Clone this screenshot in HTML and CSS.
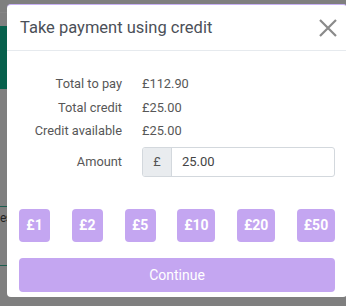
FILE: index.html
```html
<!DOCTYPE html>
<html>
<head>
<meta charset="utf-8">
<link rel="stylesheet" href="styles.css">
</head>
<body>
<div class="page">
  <div class="strip">
    <div class="strip-top"></div>
    <div class="strip-green"></div>
    <div class="strip-gap"></div>
    <div class="strip-line"></div>
    <div class="strip-text">es</div>
    <div class="strip-space"></div>
    <div class="strip-line"></div>
  </div>
  <div class="modal">
    <div class="modal-header">
      <h1 class="title">Take payment using credit</h1>
      <svg class="close" width="20" height="20" viewBox="0 0 20 20"><path d="M2 2 L18 18 M18 2 L2 18" stroke="#8a8a8a" stroke-width="2.2" fill="none"/></svg>
    </div>
    <div class="modal-body">
      <div class="summary">
        <div class="label">Total to pay</div><div class="value">£112.90</div>
        <div class="label">Total credit</div><div class="value">£25.00</div>
        <div class="label">Credit available</div><div class="value">£25.00</div>
        <div class="label">Amount</div>
        <div class="input-group"><span class="addon">£</span><span class="input">25.00</span></div>
      </div>
      <div class="quick">
        <button class="qbtn">£1</button>
        <button class="qbtn">£2</button>
        <button class="qbtn">£5</button>
        <button class="qbtn wide">£10</button>
        <button class="qbtn wide">£20</button>
        <button class="qbtn wide">£50</button>
      </div>
      <button class="continue">Continue</button>
    </div>
  </div>
</div>
</body>
</html>
```
FILE: styles.css
```css
html, body { margin: 0; padding: 0; }
body {
  width: 346px;
  height: 306px;
  overflow: hidden;
  background: #7f7f7f;
  font-family: Roboto, "Noto Sans", sans-serif;
}
.page { display: flex; height: 306px; }
.strip { flex: 0 0 7px; width: 7px; display: flex; flex-direction: column; overflow: hidden; }
.strip-top { height: 12px; border-bottom: 1px solid #858585; flex: 0 0 auto; }
.strip-green { margin-top: 13px; height: 63px; background: #07604c; }
.strip-gap { height: 117px; }
.strip-line { height: 1px; background: #1d5e4f; }
.strip-text { height: 18px; line-height: 18px; font-size: 12px; color: #222; white-space: nowrap; margin-top: 2px; letter-spacing: -0.5px; }
.strip-space { height: 38px; }

.modal {
  flex: 0 0 340px;
  margin-top: 4px;
  height: 292px;
  background: #fff;
  border-top: 1px solid #c7b0f3;
  border-radius: 4px;
  display: flex;
  flex-direction: column;
}
.modal-header {
  height: 45px;
  border-bottom: 1px solid #e6eaee;
  display: flex;
  align-items: center;
  justify-content: space-between;
  padding: 0 9px 0 13px;
}
.title { margin: 0; font-size: 16.5px; font-weight: 400; color: #4b5058; }
.close { display: block; }
.modal-body { padding: 25px 12px 0 12px; }
.summary {
  display: grid;
  grid-template-columns: 103px 1fr;
  column-gap: 20px;
  row-gap: 7.5px;
  align-items: center;
  font-size: 12.8px;
  color: #575757;
}
.label { text-align: right; line-height: 16px; }
.value { line-height: 16px; }
.input-group {
  display: flex;
  height: 30px;
  border: 1px solid #d3d8dd;
  border-radius: 3px;
  box-sizing: border-box;
  overflow: hidden;
}
.addon {
  width: 28px;
  background: #e9ecef;
  border-right: 1px solid #d3d8dd;
  display: flex; align-items: center; justify-content: center;
  color: #555;
}
.input { display: flex; align-items: center; padding-left: 10px; color: #444; font-size: 13px; }
.quick { display: flex; justify-content: space-between; margin-top: 32px; }
.qbtn {
  width: 31px; height: 33px;
  border: 0; border-radius: 4px;
  background: #c4a6f1;
  color: #fff; font-family: Roboto, sans-serif; font-weight: 700; font-size: 14px;
  padding: 0;
}
.qbtn.wide { width: 38px; }
.continue {
  display: block;
  width: 100%;
  margin-top: 16px;
  height: 34px;
  border: 0; border-radius: 4px;
  background: #c4a6f1;
  color: #fff; font-family: Roboto, sans-serif; font-size: 14px;
}
```
